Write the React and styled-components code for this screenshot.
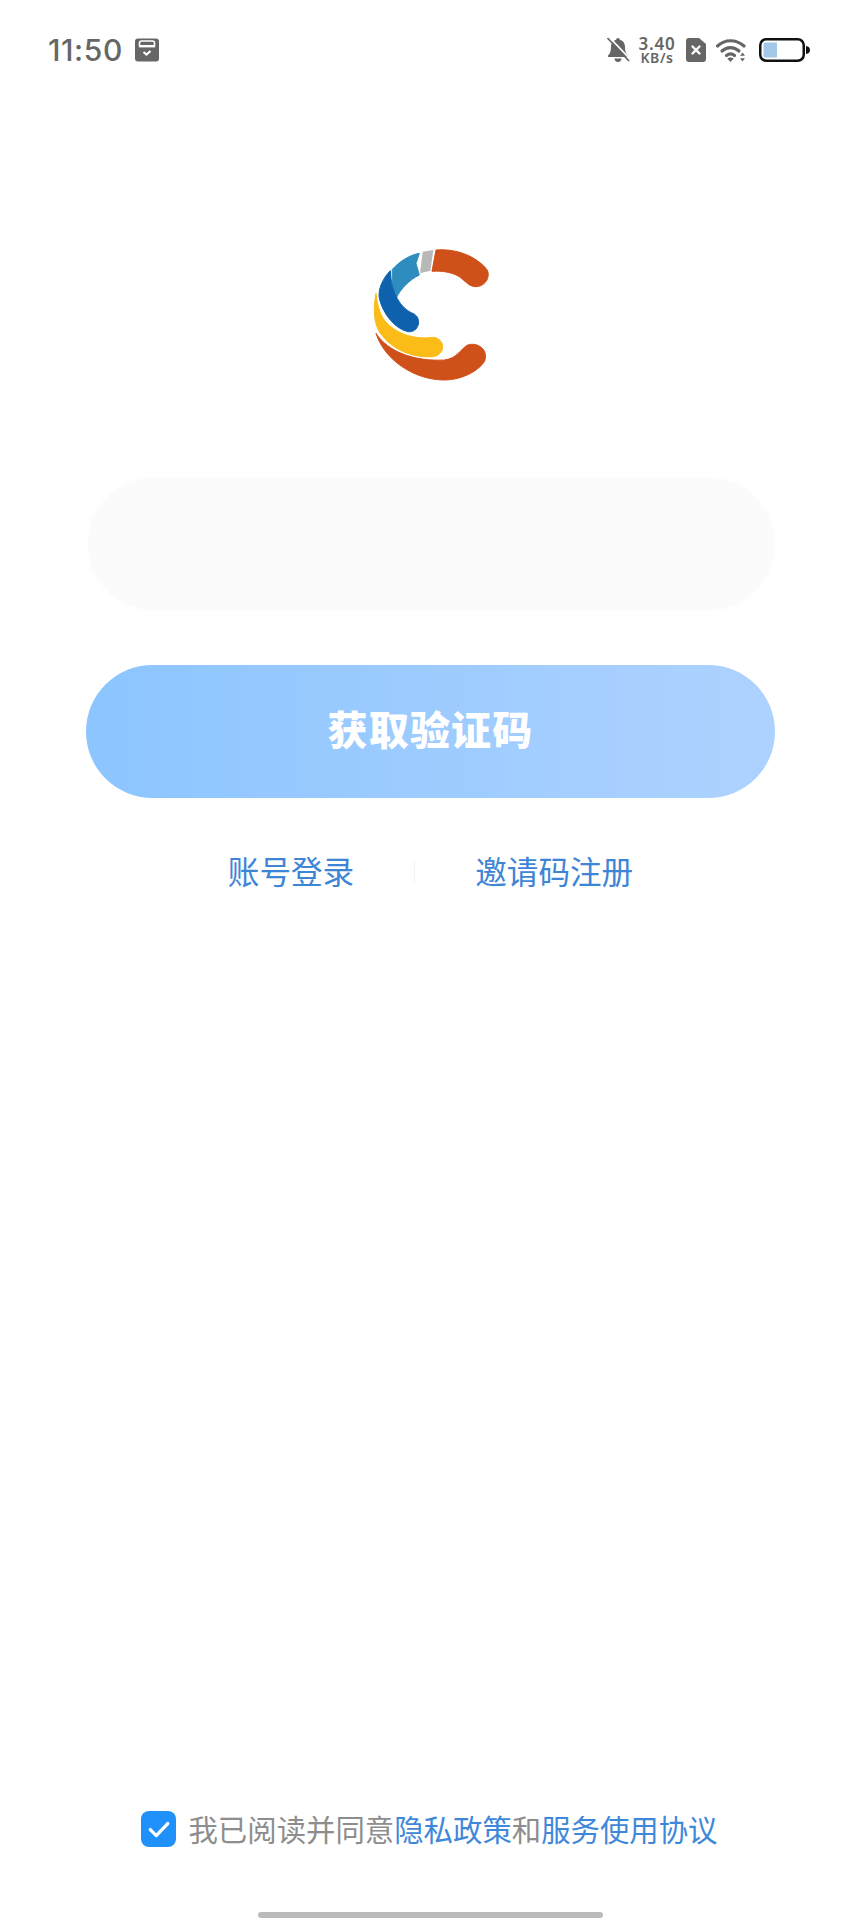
import React from "react";
import styled, { createGlobalStyle } from "styled-components";

const Global = createGlobalStyle`
  html, body { margin: 0; padding: 0; background: #fff; }
  * { box-sizing: border-box; }
`;
const CJK = `"Noto Sans CJK SC", "Noto Sans", sans-serif`;

const Page = styled.div`
  width: 861px; height: 1920px; display: flex; flex-direction: column; align-items: center;
  background: #fff; font-family: ${CJK}; overflow: hidden;
`;
const StatusBar = styled.header`
  width: 100%; height: 100px; flex: none; display: flex; align-items: center; justify-content: space-between;
  padding: 0 50px 0 48px; color: #666;
`;
const StatusGroup = styled.div`display: flex; align-items: center;`;
const Clock = styled.span`
  font: 500 30px/34px Inter, sans-serif; letter-spacing: 0.6px; color: #666; width: 75px;
`;
const NetSpeed = styled.div`
  display: flex; flex-direction: column; align-items: center; width: 38px;
  font-family: "Noto Sans", sans-serif; font-weight: 600; color: #666; margin: -1px 0 0 8px;
`;
const SpeedValue = styled.div`height: 15px; font-size: 17px; line-height: 15px; letter-spacing: 0.8px; overflow: visible;`;
const SpeedUnit = styled.div`height: 13px; font-size: 14px; line-height: 13px; letter-spacing: 0.6px; overflow: visible;`;
const Logo = styled.svg`
  display: block; flex: none; width: 160px; height: 160px; margin: 130px 0 -10px; filter: blur(0.4px);
`;
const PhoneInput = styled.input`
  display: block; flex: none; width: 687px; height: 132px; margin: 98px 0 0 1px; border: 0; outline: 0;
  border-radius: 66px; background: #fbfbfb; box-shadow: 0 0 6px #fcfcfc;
`;
const SubmitButton = styled.button`
  flex: none; width: 689px; height: 133px; margin-top: 55px; padding: 0 0 7px; border: 0; border-radius: 67px;
  background: linear-gradient(90deg, #8cc5ff, #aed2ff); color: #fff;
  font: 900 40px/1 ${CJK}; letter-spacing: 1.2px;
`;
const LinkRow = styled.nav`
  flex: none; display: flex; align-items: center; justify-content: center; height: 44px; margin: 50px 0 0; gap: 60px;
`;
const TextLink = styled.a`
  font-size: 31.6px; line-height: 44px; color: #3f85d6; text-decoration: none;
`;
const Divider = styled.span`width: 1px; height: 21px; margin-top: 4px; background: #f2f2f2;`;
const Agreement = styled.label`
  flex: none; margin: auto 2px 0 0; display: flex; align-items: center; height: 36px; gap: 12px;
  font-size: 29.4px; color: #8d8d8d;
`;
const CheckBox = styled.span`
  width: 35px; height: 36px; border-radius: 8px; background: #2090fb; display: flex; align-items: center; justify-content: center;
`;
const AgreementText = styled.span`line-height: 36px; white-space: nowrap; margin-top: -2px;`;
const AgreementLink = styled.a`color: #3f88d9;`;
const HomeBar = styled.div`
  flex: none; width: 345px; height: 6px; margin: 65px 0 2px; border-radius: 3px; background: #bbb;
`;

const CalendarIcon = () => (
  <svg width="24" height="24" viewBox="0 0 24 24" style={{ marginLeft: 12 }}>
    <rect width="24" height="23" y="0.5" rx="3" fill="#666" />
    <path d="M4.500 8.500V5a2 2 0 0 1 2-2h11a2 2 0 0 1 2 2v3.500" fill="none" stroke="#fff" strokeWidth="1.600" />
    <rect x="4" y="7" width="16" height="2.400" fill="#fff" />
    <path d="M8.500 14l3 2.500 4-3.500" fill="none" stroke="#fff" strokeWidth="2.200" />
  </svg>
);
const BellOff = () => (
  <svg width="24" height="26" viewBox="0 0 24 26">
    <path d="M12 1c1 0 1.800.8 1.800 1.800 3.400.8 5.200 3.700 5.200 7.200 0 4 .8 6.500 3 8.500V20H2v-1.500c2.200-2 3-4.500 3-8.500 0-3.500 1.800-6.400 5.200-7.200C10.200 1.800 11 1 12 1zM8.500 21.500h7c0 2-1.500 3.500-3.500 3.500s-3.500-1.500-3.500-3.500z" fill="#666" />
    <path d="M3 0L24 22" stroke="#fff" strokeWidth="1.800" />
    <path d="M1.500 1L23 24" stroke="#666" strokeWidth="1.800" />
  </svg>
);
const SimIcon = () => (
  <svg width="20" height="24" viewBox="0 0 20 24" style={{ marginLeft: 10 }}>
    <path d="M3 0h10l7 6v15a3 3 0 0 1-3 3H3a3 3 0 0 1-3-3V3a3 3 0 0 1 3-3z" fill="#666" />
    <path d="M6.500 8.500l7 7M13.500 8.500l-7 7" stroke="#fff" strokeWidth="2.400" strokeLinecap="round" />
  </svg>
);
const WifiIcon = () => (
  <svg width="30" height="24" viewBox="0 0 30 24" style={{ marginLeft: 10 }}>
    <g fill="none" stroke="#666" strokeWidth="3.200" strokeLinecap="round">
      <path d="M1.500 8C9 1 20 1 28 8" />
      <path d="M6 13c5-4.500 12-4.500 17 0" />
      <path d="M10.500 17.500c2.500-2 5.500-2 8 0" />
    </g>
    <path d="M14.500 24l-3.200-3.500c2-1.300 4.400-1.300 6.400 0z" fill="#666" />
    <path d="M26.500 14.500l2.500 3.200h-5zM26.500 23.500l-2.500-3.200h5z" fill="#666" />
  </svg>
);
const BatteryIcon = () => (
  <svg width="52" height="24" viewBox="0 0 52 24" style={{ marginLeft: 13 }}>
    <rect x="1.250" y="1.250" width="43.500" height="21.500" rx="6" fill="#fff" stroke="#111" strokeWidth="2.500" />
    <path d="M6 4.500h12v15H6a2 2 0 0 1-1.500-1.500V6A2 2 0 0 1 6 4.500z" fill="#a3c8ea" />
    <path d="M47 8c2.500.5 4 1.800 4 4s-1.500 3.500-4 4z" fill="#111" />
  </svg>
);
const CheckMark = () => (
  <svg width="24" height="20" viewBox="0 0 22 18">
    <path d="M3 9.500l5.500 5.500L19 4" fill="none" stroke="#fff" strokeWidth="3" strokeLinecap="round" strokeLinejoin="round" />
  </svg>
);
const BrandMark = () => (
  <Logo viewBox="0 0 480 480" strokeWidth="3" strokeLinejoin="round">
    <path d="M255 60C310 55 370 75 405 115C422 135 405 170 375 170C355 170 345 155 325 140C300 125 270 122 243 124Z" fill="#cf5019" stroke="#cf5019" />
    <path d="M215 65L247 60L238 122L207 130Z" fill="#b8b8b8" />
    <path d="M205 70C175 75 145 95 124 118C122 150 125 180 135 205C150 175 175 150 205 135L195 100Z" fill="#2e8dbe" stroke="#2e8dbe" />
    <path d="M118 122C95 145 80 180 85 205C95 250 130 295 170 305C205 310 215 262 185 250C150 235 120 190 118 122Z" fill="#0e62ad" stroke="#0e62ad" />
    <path d="M75 190C65 240 70 280 85 305C120 360 190 385 245 380C285 375 285 325 245 322C190 330 130 310 100 270C85 250 78 220 75 190Z" fill="#fbbc18" stroke="#fbbc18" />
    <path d="M75 310C100 390 190 450 280 450C330 450 380 425 400 395C415 360 380 335 350 345C330 355 320 385 280 390C190 395 110 365 75 310Z" fill="#cf5019" stroke="#cf5019" />
  </Logo>
);

export default function App() {
  return (
    <Page>
      <Global />
      <StatusBar>
        <StatusGroup>
          <Clock>11:50</Clock>
          <CalendarIcon />
        </StatusGroup>
        <StatusGroup>
          <BellOff />
          <NetSpeed>
            <SpeedValue>3.40</SpeedValue>
            <SpeedUnit>KB/s</SpeedUnit>
          </NetSpeed>
          <SimIcon />
          <WifiIcon />
          <BatteryIcon />
        </StatusGroup>
      </StatusBar>
      <BrandMark />
      <PhoneInput aria-label="手机号" />
      <SubmitButton>获取验证码</SubmitButton>
      <LinkRow>
        <TextLink>账号登录</TextLink>
        <Divider />
        <TextLink>邀请码注册</TextLink>
      </LinkRow>
      <Agreement>
        <CheckBox><CheckMark /></CheckBox>
        <AgreementText>
          我已阅读并同意<AgreementLink>隐私政策</AgreementLink>和<AgreementLink>服务使用协议</AgreementLink>
        </AgreementText>
      </Agreement>
      <HomeBar />
    </Page>
  );
}
